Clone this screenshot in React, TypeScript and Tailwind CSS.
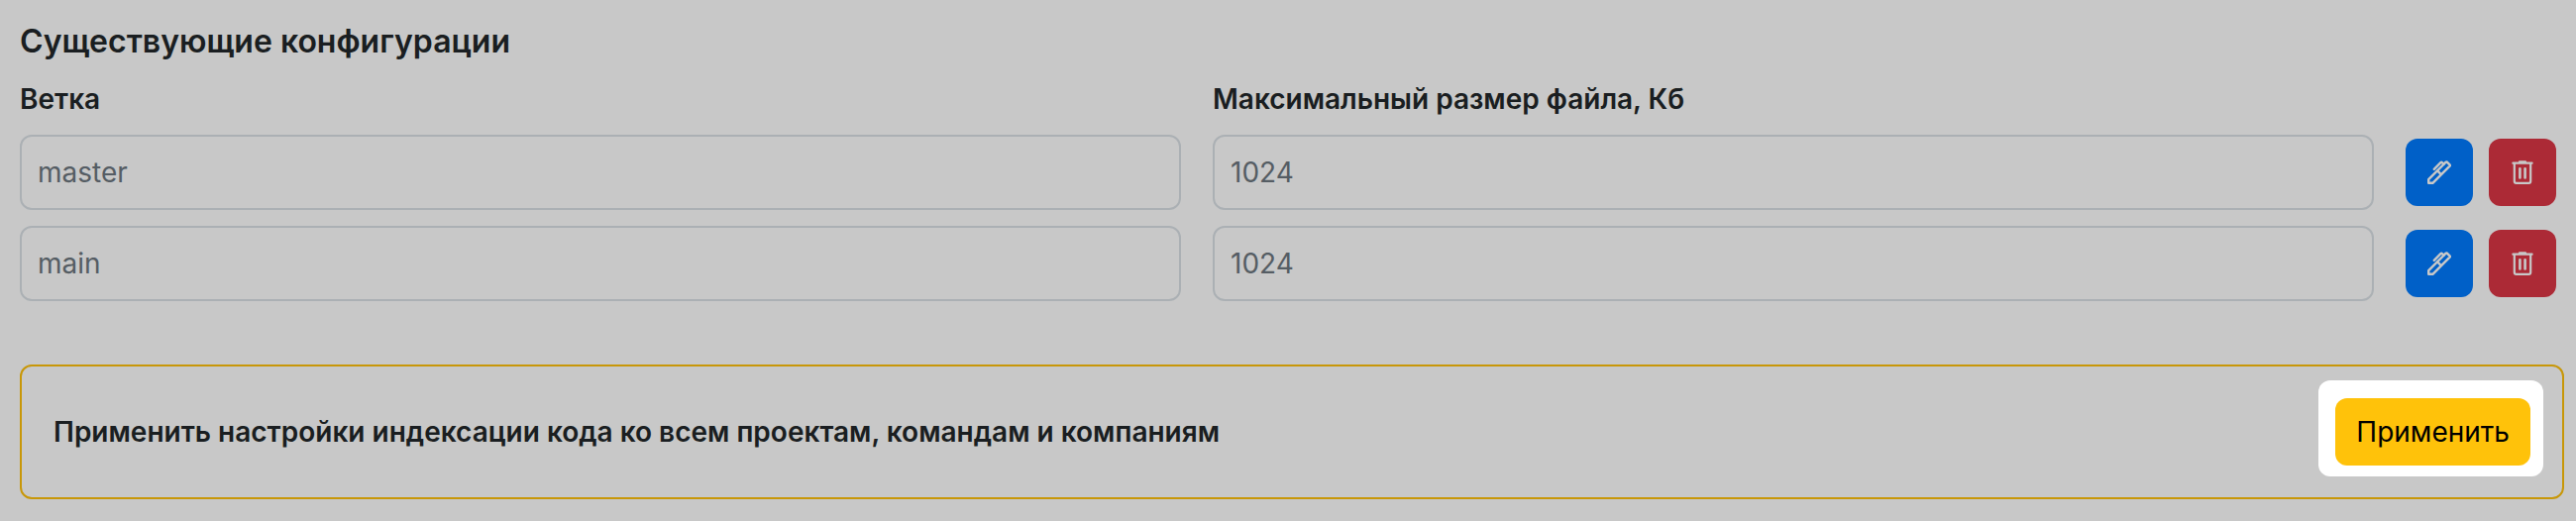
import { useState } from "react";

interface BranchConfig {
  id: number;
  branch: string;
  maxFileSize: string;
}

const INITIAL_CONFIGS: BranchConfig[] = [
  { id: 1, branch: "master", maxFileSize: "1024" },
  { id: 2, branch: "main", maxFileSize: "1024" },
];

const inputClass =
  "h-19 w-full min-w-0 rounded-xl border-2 border-[#abb0b4] bg-transparent px-4 text-[28px] text-[#555d64] outline-none";

function PenIcon() {
  return (
    <svg className="size-6" viewBox="0 0 24 24" fill="none" stroke="currentColor" strokeWidth="2.4" strokeLinecap="round" strokeLinejoin="round" aria-hidden="true">
      <path d="M1.2 22.8V19.2L16.9 3.5L18.6 1.6L19.6 1.4L22.8 4.6V5.4L5.4 22.8Z" />
      <path d="M10.2 10.4 13.6 13.8" />
      <path d="M6.8 8.8 13.4 2.2a1.2 1.2 0 0 1 1.6 0l1.7 1.4" />
    </svg>
  );
}

function TrashIcon() {
  return (
    <svg className="size-6" viewBox="0 0 24 24" fill="none" stroke="currentColor" strokeWidth="2.2" strokeLinecap="round" strokeLinejoin="round" aria-hidden="true">
      <path d="M2.4 2.7h19.2" />
      <path d="M9 1.4h6" />
      <path d="M3.8 3v18a1.8 1.8 0 0 0 1.8 1.8h12.8a1.8 1.8 0 0 0 1.8-1.8V3" />
      <path d="M9.4 8.2v9.2M14.6 8.2v9.2" strokeWidth="2.6" />
    </svg>
  );
}

interface ConfigRowProps {
  config: BranchConfig;
  onDelete: (id: number) => void;
}

function ConfigRow({ config, onDelete }: ConfigRowProps) {
  return (
    <div className="grid grid-cols-[1fr_1fr_auto] items-center gap-x-8">
      <input type="text" readOnly aria-labelledby="branch-label" className={inputClass} value={config.branch} />
      <input type="text" readOnly aria-labelledby="size-label" className={inputClass} value={config.maxFileSize} />
      <div className="flex gap-4">
        <button type="button" aria-label="Редактировать" className="flex size-17 items-center justify-center rounded-xl bg-[#0060c8] text-[#c8c8c8]">
          <PenIcon />
        </button>
        <button
          type="button"
          aria-label="Удалить"
          onClick={() => onDelete(config.id)}
          className="flex size-17 items-center justify-center rounded-xl bg-[#ac2a36] text-[#c8c8c8]"
        >
          <TrashIcon />
        </button>
      </div>
    </div>
  );
}

export default function App() {
  const [configs, setConfigs] = useState(INITIAL_CONFIGS);

  const handleDelete = (id: number) => {
    setConfigs(configs.filter((config) => config.id !== id));
  };

  return (
    <main className="min-h-screen bg-[#c8c8c8] pt-5 pr-3 pb-5 pl-5 font-[Inter,sans-serif] text-[28px] text-[#1a1e21]">
      <section className="pr-2">
        <h2 className="text-[32px] leading-11 font-semibold">Существующие конфигурации</h2>
        <div className="mt-3 mb-3 grid grid-cols-[1fr_1fr_152px] gap-x-8 leading-12 font-semibold">
          <span id="branch-label">Ветка</span>
          <span id="size-label">Максимальный размер файла, Кб</span>
        </div>
        <div className="flex flex-col gap-4">
          {configs.map((config) => (
            <ConfigRow key={config.id} config={config} onDelete={handleDelete} />
          ))}
        </div>
      </section>

      <section className="mt-16 flex items-center justify-between rounded-xl border-2 border-[#c89708] p-8">
        <p className="leading-12 font-semibold">Применить настройки индексации кода ко всем проектам, командам и компаниям</p>
        <div className="relative flex">
          <div className="absolute -top-[18px] -right-[13px] -bottom-[11px] -left-[17px] rounded-xl bg-white" />
          <button type="button" className="relative h-17 rounded-xl bg-[#ffc20a] px-[21px] text-black">
            Применить
          </button>
        </div>
      </section>
    </main>
  );
}
